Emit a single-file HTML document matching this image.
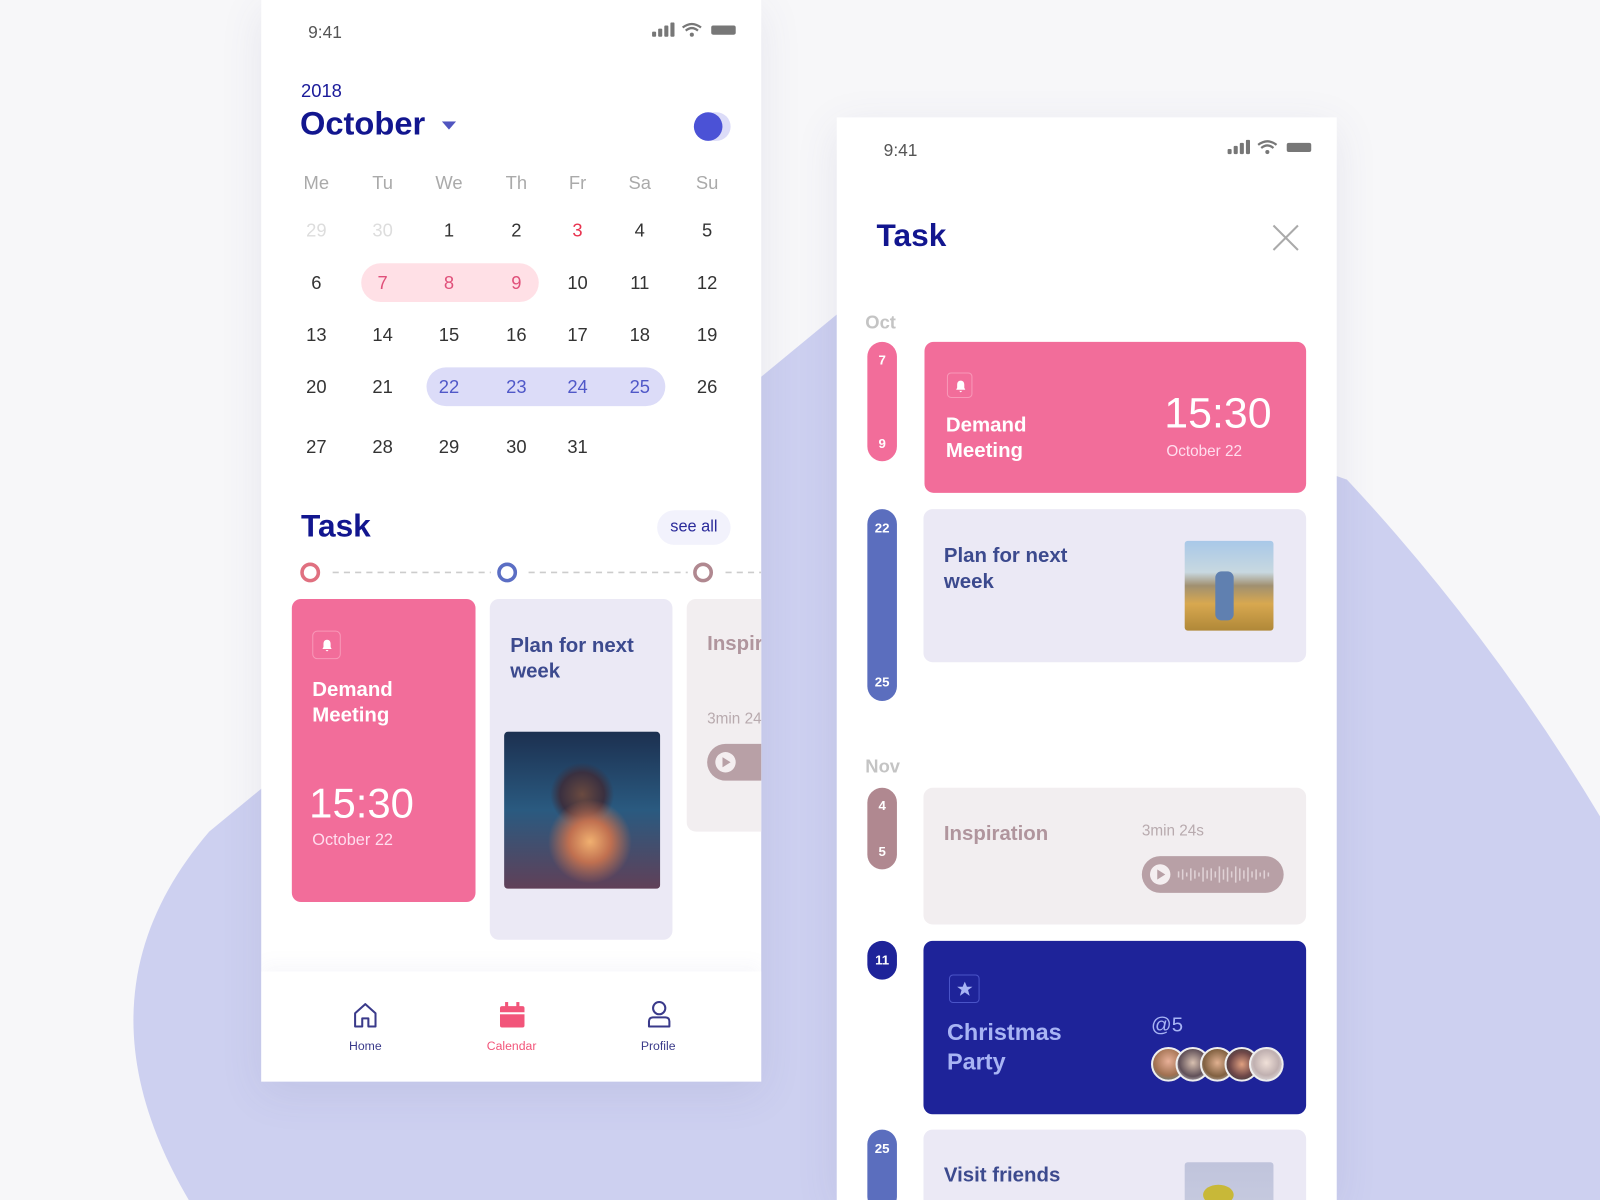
<!DOCTYPE html>
<html><head><meta charset="utf-8"><style>
*{margin:0;padding:0;box-sizing:border-box}
html,body{width:1600px;height:1200px;overflow:hidden;background:#f7f7f9;font-family:"Liberation Sans",sans-serif}
#w{position:absolute;left:0;top:0;width:1568px;height:1176px;transform:scale(1.020408);transform-origin:0 0}
.a{position:absolute}
.t{position:absolute;white-space:nowrap;line-height:1}
.phone{position:absolute;background:#fff;box-shadow:0 10px 40px rgba(80,80,140,.10);overflow:hidden}
.b{font-weight:bold}
.c{position:absolute;width:40px;text-align:center;font-size:18px;line-height:1;color:#333}
.card{position:absolute;border-radius:9px}
.pill{position:absolute;width:29px;border-radius:15px;color:#fff;font-weight:bold;font-size:13px;text-align:center}
</style></head><body><div id="w">
<svg class="a" style="left:0;top:0" width="1568" height="1176"><path d="M185,1176 C105,1040 115,920 205,815 L830,300 L1320,470 Q1460,620 1568,800 L1568,1176 Z" fill="#cdd0f0"/></svg>

<!-- LEFT PHONE -->
<div class="phone" style="left:256px;top:0;width:490px;height:1060px">
<div class="t" style="left:46px;top:23px;font-size:17px;color:#555">9:41</div>
<svg class="a" style="left:383px;top:22px" width="84" height="16"><rect x="0" y="9" width="4" height="5" rx="1" fill="#777"/><rect x="6" y="6" width="4" height="8" rx="1" fill="#777"/><rect x="12" y="3" width="4" height="11" rx="1" fill="#777"/><rect x="18" y="0" width="4" height="14" rx="1" fill="#777"/><path d="M30 5 Q39 -2 48 5 M33 8 Q39 3 45 8" stroke="#777" stroke-width="2.2" fill="none"/><circle cx="39" cy="12" r="2" fill="#777"/><rect x="58" y="3" width="24" height="9" rx="2" fill="#777"/></svg>
<div class="t" style="left:39px;top:80px;font-size:18px;color:#1a1a9a">2018</div>
<div class="t b" style="left:38px;top:105px;font-size:32px;color:#12168f">October</div>
<svg class="a" style="left:177px;top:119px" width="14" height="9"><path d="M0 0H14L7 8Z" fill="#5055c0"/></svg>
<div class="a" style="left:430px;top:110px;width:30px;height:28px;border-radius:14px;background:#dcdcf8"></div>
<div class="a" style="left:424px;top:110px;width:28px;height:28px;border-radius:14px;background:#4b52d6"></div>
<div class="c" style="left:34px;top:170px;color:#aaa">Me</div><div class="c" style="left:99px;top:170px;color:#aaa">Tu</div><div class="c" style="left:164px;top:170px;color:#aaa">We</div><div class="c" style="left:230px;top:170px;color:#aaa">Th</div><div class="c" style="left:290px;top:170px;color:#aaa">Fr</div><div class="c" style="left:351px;top:170px;color:#aaa">Sa</div><div class="c" style="left:417px;top:170px;color:#aaa">Su</div>
<div class="c" style="left:34px;top:217px;color:#ddd">29</div><div class="c" style="left:99px;top:217px;color:#ddd">30</div><div class="c" style="left:164px;top:217px">1</div><div class="c" style="left:230px;top:217px">2</div><div class="c" style="left:290px;top:217px;color:#e8334f">3</div><div class="c" style="left:351px;top:217px">4</div><div class="c" style="left:417px;top:217px">5</div>
<div class="a" style="left:98px;top:258px;width:174px;height:38px;border-radius:19px;background:#ffe0e6"></div>
<div class="c" style="left:34px;top:268px">6</div><div class="c" style="left:99px;top:268px;color:#e0507a">7</div><div class="c" style="left:164px;top:268px;color:#e0507a">8</div><div class="c" style="left:230px;top:268px;color:#e0507a">9</div><div class="c" style="left:290px;top:268px">10</div><div class="c" style="left:351px;top:268px">11</div><div class="c" style="left:417px;top:268px">12</div>
<div class="c" style="left:34px;top:319px">13</div><div class="c" style="left:99px;top:319px">14</div><div class="c" style="left:164px;top:319px">15</div><div class="c" style="left:230px;top:319px">16</div><div class="c" style="left:290px;top:319px">17</div><div class="c" style="left:351px;top:319px">18</div><div class="c" style="left:417px;top:319px">19</div>
<div class="a" style="left:162px;top:360px;width:234px;height:38px;border-radius:19px;background:#dcdcf8"></div>
<div class="c" style="left:34px;top:370px">20</div><div class="c" style="left:99px;top:370px">21</div><div class="c" style="left:164px;top:370px;color:#5058c8">22</div><div class="c" style="left:230px;top:370px;color:#5058c8">23</div><div class="c" style="left:290px;top:370px;color:#5058c8">24</div><div class="c" style="left:351px;top:370px;color:#5058c8">25</div><div class="c" style="left:417px;top:370px">26</div>
<div class="c" style="left:34px;top:429px">27</div><div class="c" style="left:99px;top:429px">28</div><div class="c" style="left:164px;top:429px">29</div><div class="c" style="left:230px;top:429px">30</div><div class="c" style="left:290px;top:429px">31</div>
<div class="t b" style="left:39px;top:500px;font-size:31px;color:#12168f">Task</div>
<div class="a" style="left:388px;top:500px;width:72px;height:34px;border-radius:17px;background:#f2f2fc;color:#2a2a9a;font-size:16px;line-height:34px;text-align:center">see all</div>
<svg class="a" style="left:0;top:550px" width="490" height="24"><g stroke="#ccc" stroke-width="1.5" stroke-dasharray="6 5"><line x1="70" y1="11" x2="225" y2="11"/><line x1="262" y1="11" x2="418" y2="11"/><line x1="455" y1="11" x2="490" y2="11"/></g><circle cx="48" cy="11" r="8" fill="none" stroke="#e07080" stroke-width="3.5"/><circle cx="241" cy="11" r="8" fill="none" stroke="#5b6ec4" stroke-width="3.5"/><circle cx="433" cy="11" r="8" fill="none" stroke="#b08890" stroke-width="3.5"/></svg>
<div class="card" style="left:30px;top:587px;width:180px;height:297px;background:#f26d9a">
<div class="a" style="left:20px;top:31px;width:28px;height:28px;border:1px solid #f898b8;border-radius:5px"><svg style="position:absolute;left:8px;top:7px" width="11" height="13"><path d="M5.5 1C3 1 2 3 2 5V8L1 10H10L9 8V5C9 3 8 1 5.5 1Z M4 11H7L5.5 12.5Z" fill="#fff"/></svg></div>
<div class="t b" style="left:20px;top:77px;font-size:20px;color:#fff;line-height:25px">Demand<br>Meeting</div>
<div class="t" style="left:17px;top:180px;font-size:41px;color:#fff;font-weight:300">15:30</div>
<div class="t" style="left:20px;top:229px;font-size:16px;color:#fde">October 22</div></div>
<div class="card" style="left:224px;top:587px;width:179px;height:334px;background:#ebe9f5">
<div class="t b" style="left:20px;top:34px;font-size:20px;color:#3c4a8e;line-height:25px">Plan for next<br>week</div>
<div class="a" style="left:14px;top:130px;width:153px;height:154px;border-radius:4px;background:radial-gradient(circle at 55% 70%,#f0b070 0,#c07050 15%,transparent 30%),radial-gradient(circle at 50% 40%,#6a4a40 0,#3a3040 18%,transparent 26%),linear-gradient(180deg,#1c3050 0%,#2a5a80 50%,#604058 100%)"></div></div>
<div class="card" style="left:417px;top:587px;width:90px;height:228px;background:#f2eef0">
<div class="t b" style="left:20px;top:34px;font-size:20px;color:#b0959d">Inspiration</div>
<div class="t" style="left:20px;top:110px;font-size:15px;color:#b8aaae">3min 24s</div>
<div class="a" style="left:20px;top:142px;width:80px;height:36px;border-radius:18px;background:#b8a0a6"><div class="a" style="left:8px;top:8px;width:20px;height:20px;border-radius:10px;background:#f4eef0"></div><svg class="a" style="left:15px;top:13px" width="8" height="10"><path d="M0 0L8 5L0 10Z" fill="#b8a0a6"/></svg></div></div>
<div class="a" style="left:0;top:952px;width:490px;height:108px;background:#fff;box-shadow:0 -8px 16px rgba(120,120,170,.05)"></div>
<svg class="a" style="left:90px;top:982px" width="24" height="26"><path d="M2 11L12 2L22 11V24H15V16H9V24H2Z" fill="none" stroke="#3a3a8a" stroke-width="2" stroke-linejoin="round"/></svg>
<div class="t" style="left:86px;top:1019px;font-size:12px;color:#3a3a8a">Home</div>
<svg class="a" style="left:233px;top:982px" width="26" height="26"><rect x="1" y="4" width="24" height="21" rx="2" fill="#f2557a"/><rect x="1" y="10" width="24" height="2" fill="#fff"/><rect x="6" y="0" width="3" height="7" fill="#f2557a"/><rect x="17" y="0" width="3" height="7" fill="#f2557a"/></svg>
<div class="t" style="left:221px;top:1019px;font-size:12px;color:#f2557a">Calendar</div>
<svg class="a" style="left:378px;top:980px" width="24" height="28"><circle cx="12" cy="8" r="6" fill="none" stroke="#3a3a8a" stroke-width="2"/><path d="M2 26V21Q2 17 6 17H18Q22 17 22 21V26Z" fill="none" stroke="#3a3a8a" stroke-width="2" stroke-linejoin="round"/></svg>
<div class="t" style="left:372px;top:1019px;font-size:12px;color:#3a3a8a">Profile</div>
</div>

<!-- RIGHT PHONE -->
<div class="phone" style="left:820px;top:115px;width:490px;height:1061px">
<div class="t" style="left:46px;top:24px;font-size:17px;color:#555">9:41</div>
<svg class="a" style="left:383px;top:22px" width="84" height="16"><rect x="0" y="9" width="4" height="5" rx="1" fill="#777"/><rect x="6" y="6" width="4" height="8" rx="1" fill="#777"/><rect x="12" y="3" width="4" height="11" rx="1" fill="#777"/><rect x="18" y="0" width="4" height="14" rx="1" fill="#777"/><path d="M30 5 Q39 -2 48 5 M33 8 Q39 3 45 8" stroke="#777" stroke-width="2.2" fill="none"/><circle cx="39" cy="12" r="2" fill="#777"/><rect x="58" y="3" width="24" height="9" rx="2" fill="#777"/></svg>
<div class="t b" style="left:39px;top:100px;font-size:31px;color:#12168f">Task</div>
<svg class="a" style="left:427px;top:105px" width="26" height="26"><path d="M1 1L25 25M25 1L1 25" stroke="#aaa" stroke-width="2"/></svg>
<div class="t b" style="left:28px;top:192px;font-size:18px;color:#c4c4c4">Oct</div>
<div class="pill" style="left:30px;top:220px;height:117px;background:#f26d9a"><div style="margin-top:10px">7</div><div style="position:absolute;bottom:10px;width:100%">9</div></div>
<div class="card" style="left:86px;top:220px;width:374px;height:148px;background:#f26d9a">
<div class="a" style="left:22px;top:30px;width:25px;height:25px;border:1px solid #f898b8;border-radius:4px"><svg style="position:absolute;left:7px;top:6px" width="11" height="13"><path d="M5.5 1C3 1 2 3 2 5V8L1 10H10L9 8V5C9 3 8 1 5.5 1Z M4 11H7L5.5 12.5Z" fill="#fff"/></svg></div>
<div class="t b" style="left:21px;top:70px;font-size:20px;color:#fff;line-height:25px">Demand<br>Meeting</div>
<div class="t" style="left:235px;top:49px;font-size:42px;color:#fff;font-weight:300">15:30</div>
<div class="t" style="left:237px;top:100px;font-size:15px;color:#fde">October 22</div></div>
<div class="pill" style="left:30px;top:384px;height:188px;background:#5b6ebe"><div style="margin-top:11px">22</div><div style="position:absolute;bottom:11px;width:100%">25</div></div>
<div class="card" style="left:85px;top:384px;width:375px;height:150px;background:#ebe9f5">
<div class="t b" style="left:20px;top:34px;font-size:20px;color:#3c4a8e;line-height:25px">Plan for next<br>week</div>
<div class="a" style="left:256px;top:31px;width:87px;height:88px;border-radius:3px;background:linear-gradient(180deg,#a8c8e8 0%,#c8d8e0 35%,#a09070 50%,#d8a850 70%,#b08838 100%)"><div class="a" style="left:30px;top:30px;width:18px;height:48px;border-radius:6px;background:#6080b0"></div></div></div>
<div class="t b" style="left:28px;top:627px;font-size:18px;color:#c4c4c4">Nov</div>
<div class="pill" style="left:30px;top:657px;height:80px;background:#b08890"><div style="margin-top:10px">4</div><div style="position:absolute;bottom:10px;width:100%">5</div></div>
<div class="card" style="left:85px;top:657px;width:375px;height:134px;background:#f2eef0">
<div class="t b" style="left:20px;top:35px;font-size:20px;color:#b0959d">Inspiration</div>
<div class="t" style="left:214px;top:35px;font-size:15px;color:#b8aaae">3min 24s</div>
<div class="a" style="left:214px;top:67px;width:139px;height:36px;border-radius:18px;background:#b8a0a6"><div class="a" style="left:8px;top:8px;width:20px;height:20px;border-radius:10px;background:#f4eef0"></div><svg class="a" style="left:15px;top:13px" width="8" height="10"><path d="M0 0L8 5L0 10Z" fill="#b8a0a6"/></svg>
<svg class="a" style="left:34px;top:8px" width="96" height="20"><g stroke="#e0d2d6" stroke-width="1.5"><path d="M2 7V13M6 5V15M10 8V12M14 4V16M18 6V14M22 8V12M26 3V17M30 6V14M34 4V16M38 7V13M42 2V18M46 5V15M50 3V17M54 7V13M58 2V18M62 4V16M66 6V14M70 3V17M74 7V13M78 5V15M82 8V12M86 6V14M90 8V12"/></g></svg></div></div>
<div class="pill" style="left:30px;top:807px;height:38px;background:#1e2399;line-height:38px">11</div>
<div class="card" style="left:85px;top:807px;width:375px;height:170px;background:#1e2399">
<div class="a" style="left:25px;top:33px;width:30px;height:28px;border:1px solid #4a54c8;border-radius:4px"><svg style="position:absolute;left:7px;top:6px" width="15" height="15"><path d="M7.5 0L9.6 5H15L10.7 8.2L12.3 14L7.5 10.5L2.7 14L4.3 8.2L0 5H5.4Z" fill="#a8b4f4"/></svg></div>
<div class="t b" style="left:23px;top:75px;font-size:23px;color:#a8b4f4;line-height:29px">Christmas<br>Party</div>
<div class="t" style="left:223px;top:73px;font-size:20px;color:#a8b4f4;font-weight:300">@5</div>
<div class="a" style="left:223px;top:104px;width:34px;height:34px;border-radius:17px;border:2px solid #eee;background:radial-gradient(circle at 50% 40%,#e8b098,#a07050 60%,#4a8a90)"></div>
<div class="a" style="left:247px;top:104px;width:34px;height:34px;border-radius:17px;border:2px solid #eee;background:radial-gradient(circle at 50% 45%,#d8c0b0,#605058 60%,#eee)"></div>
<div class="a" style="left:271px;top:104px;width:34px;height:34px;border-radius:17px;border:2px solid #eee;background:radial-gradient(circle at 50% 45%,#e0b090,#806040 60%,#ccc)"></div>
<div class="a" style="left:295px;top:104px;width:34px;height:34px;border-radius:17px;border:2px solid #eee;background:radial-gradient(circle at 50% 50%,#e0a080,#704848 55%,#2a3a40)"></div>
<div class="a" style="left:319px;top:104px;width:34px;height:34px;border-radius:17px;border:2px solid #eee;background:radial-gradient(circle at 50% 45%,#f0e0d8,#c0b0b0 55%,#eee)"></div></div>
<div class="pill" style="left:30px;top:992px;height:80px;background:#5b6ebe"><div style="margin-top:11px">25</div></div>
<div class="card" style="left:85px;top:992px;width:375px;height:100px;background:#ebe9f5">
<div class="t b" style="left:20px;top:35px;font-size:20px;color:#3c4a8e">Visit friends</div>
<div class="a" style="left:256px;top:32px;width:87px;height:60px;border-radius:3px;background:linear-gradient(180deg,#c0c4dc,#c8cce0)"><div class="a" style="left:18px;top:22px;width:30px;height:20px;border-radius:50%;background:#c8b838"></div></div></div>
</div>
</div></body></html>
